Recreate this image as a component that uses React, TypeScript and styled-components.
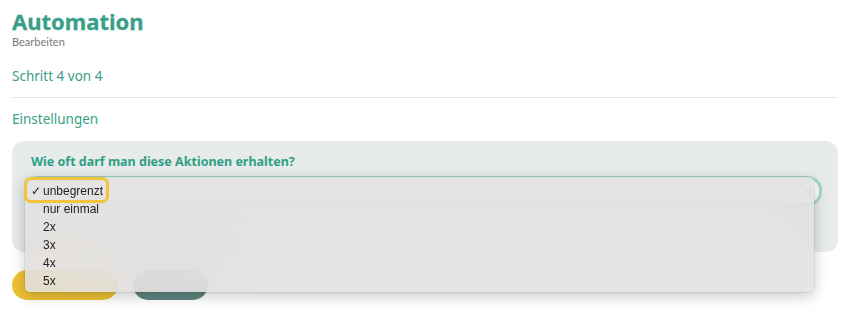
import React from 'react'
import styled, {createGlobalStyle} from 'styled-components'

const GlobalStyle = createGlobalStyle`
  html, body {
    margin: 0;
    padding: 0;
    background: #ffffff;
    overflow: hidden;
  }
  body {
    font-family: 'Noto Sans', 'Open Sans', sans-serif;
  }
`

const Page = styled.div`
  width: 850px;
  height: 312px;
  box-sizing: border-box;
  padding: 8px 12px 0 12px;
  overflow: hidden;
`

const Title = styled.h1`
  margin: 0;
  font-family: 'Noto Sans', sans-serif;
  font-weight: 700;
  font-size: 22px;
  line-height: 26px;
  color: #3a9e89;
  -webkit-text-stroke: 0.3px #3a9e89;
`

const Subtitle = styled.div`
  margin-top: 1px;
  font-family: Lato, 'Noto Sans', sans-serif;
  font-size: 11px;
  line-height: 14px;
  color: #777c7a;
`

const StepLabel = styled.div<{$gap?: number}>`
  margin-top: ${(p) => p.$gap ?? 0}px;
  font-size: 13.5px;
  line-height: 20px;
  color: #3a9e89;
`

const Divider = styled.hr`
  margin: 11px 0 11px 0;
  border: none;
  border-top: 1.5px solid #e6e8e7;
`

const Card = styled.section`
  margin-top: 12px;
  height: 111px;
  box-sizing: border-box;
  padding: 13px 12px 0 12px;
  background: #e7ebe9;
  border-radius: 12px;
`

const Question = styled.div`
  padding-left: 7px;
  font-size: 12.5px;
  font-weight: 700;
  line-height: 16px;
  color: #2e9f86;
`

const SelectWrap = styled.div`
  position: relative;
  margin-top: 6px;
  width: 798px;
`

const SelectBox = styled.div`
  height: 30px;
  box-sizing: border-box;
  border: 3px solid #a5d8cc;
  border-radius: 14px;
  background: #ffffff;
  display: flex;
  align-items: center;
  justify-content: flex-end;
  padding-right: 6px;
`

const Menu = styled.ul`
  position: absolute;
  top: 1px;
  left: 1px;
  width: 789px;
  height: 115px;
  box-sizing: border-box;
  margin: 0;
  padding: 5px 0 0 0;
  list-style: none;
  background: rgba(226, 224, 223, 0.86);
  backdrop-filter: blur(36px);
  border-radius: 5px;
  box-shadow: 0 0 0 0.5px rgba(0, 0, 0, 0.12), 0 4px 14px rgba(0, 0, 0, 0.22);
  font-family: 'Liberation Sans', Arial, sans-serif;
  font-size: 12px;
  color: #222;
  z-index: 2;
`

const Item = styled.li`
  position: relative;
  height: 18px;
  line-height: 18px;
  padding-left: 18px;
`

const Check = styled.span`
  position: absolute;
  left: 6px;
  top: 0;
`

const FocusRing = styled.div`
  position: absolute;
  left: 0;
  top: 1px;
  width: 85px;
  height: 26px;
  box-sizing: border-box;
  border: 3px solid #f2c43b;
  border-radius: 7px;
  pointer-events: none;
  z-index: 3;
`

const Buttons = styled.div`
  display: flex;
  gap: 15px;
  margin-top: 18px;
`

const Button = styled.button<{$bg: string; $w: number}>`
  width: ${(p) => p.$w}px;
  height: 30px;
  border: none;
  border-radius: 15px;
  background: ${(p) => p.$bg};
`

const options = ['unbegrenzt', 'nur einmal', '2x', '3x', '4x', '5x']

const Chevron = () => (
  <svg width="8" height="8" viewBox="0 0 8 8" fill="none" stroke="#666" strokeWidth="1.2">
    <path d="M1 3l3 3 3-3" />
  </svg>
)

const App = () => {
  return (
    <>
      <GlobalStyle />
      <Page>
        <Title>Automation</Title>
        <Subtitle>Bearbeiten</Subtitle>
        <StepLabel $gap={17}>Schritt 4 von 4</StepLabel>
        <Divider />
        <StepLabel>Einstellungen</StepLabel>
        <Card>
          <Question>Wie oft darf man diese Aktionen erhalten?</Question>
          <SelectWrap>
            <SelectBox>
              <Chevron />
            </SelectBox>
            <Menu>
              {options.map((o, i) => (
                <Item key={o}>
                  {i === 0 && <Check>✓</Check>}
                  {o}
                </Item>
              ))}
            </Menu>
            <FocusRing />
          </SelectWrap>
        </Card>
        <Buttons>
          <Button $bg="#eec234" $w={106} aria-label="Speichern" />
          <Button $bg="#5f8680" $w={75} aria-label="Zurück" />
        </Buttons>
      </Page>
    </>
  )
}

export default App
